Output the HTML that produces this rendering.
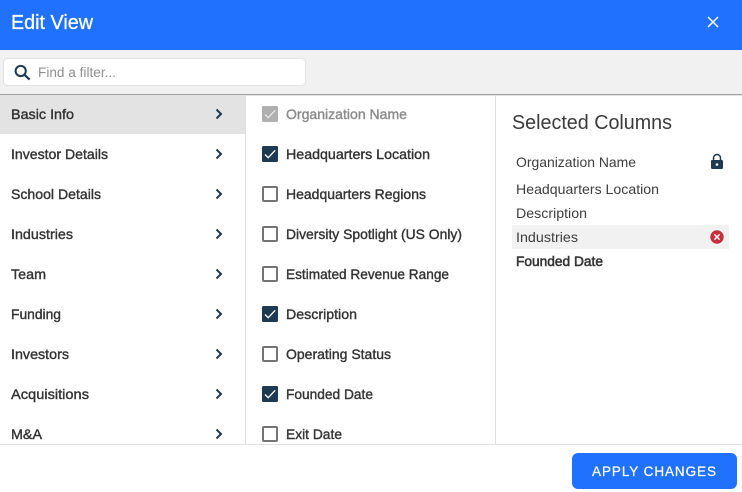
<!DOCTYPE html>
<html lang="en">
<head>
<meta charset="utf-8">
<title>Edit View</title>
<style>
html,body{margin:0;padding:0;width:742px;height:492px;overflow:hidden;background:#fff}
svg{display:block;position:absolute;left:0;top:0}
text{font-family:"Liberation Sans",sans-serif;font-size:14px}
.m{fill:#333;stroke:#333;stroke-width:.38px}
.g{fill:#8a8a8a;stroke:#8a8a8a;stroke-width:.38px}
.r{fill:#3d3d3d}
</style>
</head>
<body>
<svg width="742" height="492" viewBox="0 0 742 492" xmlns="http://www.w3.org/2000/svg">
<rect width="742" height="50" fill="#2171ff"/>
<rect y="50" width="742" height="44" fill="#f1f1f1"/>
<rect y="94" width="742" height="1" fill="#a0a0a0"/>
<rect y="95" width="742" height="1" fill="#e4e4e4"/>
<text x="11" y="29" style="font-size:20px" fill="#fff" stroke="#fff" stroke-width=".3" textLength="82" lengthAdjust="spacingAndGlyphs">Edit View</text>
<path d="M708 17l10 10M718 17l-10 10" stroke="#fff" stroke-width="1.5" fill="none"/>

<rect x="3.5" y="58.5" width="302" height="27" rx="4" fill="#fff" stroke="#e2e2e2"/>
<circle cx="20.7" cy="71" r="5.1" fill="none" stroke="#1d3a50" stroke-width="2"/>
<path d="M24.5 74.8L29.6 79.6" stroke="#1d3a50" stroke-width="2.2" fill="none"/>
<text x="38" y="77" fill="#8f8f8f" textLength="78" lengthAdjust="spacingAndGlyphs">Find a filter...</text>

<rect y="96" width="245" height="38" fill="#e3e3e3"/>
<rect x="245" y="96" width="1" height="348" fill="#e0e0e0"/>
<rect x="495" y="96" width="1" height="348" fill="#e0e0e0"/>
<rect y="444" width="742" height="1" fill="#e0e0e0"/>

<text class="m" x="11" y="119" textLength="63" lengthAdjust="spacingAndGlyphs">Basic Info</text>
<text class="m" x="11" y="159" textLength="97" lengthAdjust="spacingAndGlyphs">Investor Details</text>
<text class="m" x="11" y="199" textLength="90" lengthAdjust="spacingAndGlyphs">School Details</text>
<text class="m" x="11" y="239" textLength="62" lengthAdjust="spacingAndGlyphs">Industries</text>
<text class="m" x="11" y="279" textLength="35" lengthAdjust="spacingAndGlyphs">Team</text>
<text class="m" x="11" y="319" textLength="50" lengthAdjust="spacingAndGlyphs">Funding</text>
<text class="m" x="11" y="359" textLength="58" lengthAdjust="spacingAndGlyphs">Investors</text>
<text class="m" x="11" y="399" textLength="78" lengthAdjust="spacingAndGlyphs">Acquisitions</text>
<text class="m" x="11" y="439" textLength="31" lengthAdjust="spacingAndGlyphs">M&amp;A</text>

<g fill="none" stroke="#1d3a50" stroke-width="2">
<path d="M216.5 109.5l4.5 4.5-4.5 4.5"/>
<path d="M216.5 149.5l4.5 4.5-4.5 4.5"/>
<path d="M216.5 189.5l4.5 4.5-4.5 4.5"/>
<path d="M216.5 229.5l4.5 4.5-4.5 4.5"/>
<path d="M216.5 269.5l4.5 4.5-4.5 4.5"/>
<path d="M216.5 309.5l4.5 4.5-4.5 4.5"/>
<path d="M216.5 349.5l4.5 4.5-4.5 4.5"/>
<path d="M216.5 389.5l4.5 4.5-4.5 4.5"/>
<path d="M216.5 429.5l4.5 4.5-4.5 4.5"/>
</g>

<rect x="262" y="106" width="16" height="16" rx="1.5" fill="#b0b0b0"/>
<path d="M265 114.5l3.2 3.2 7-7.4" fill="none" stroke="#e8e8e8" stroke-width="1.3"/>
<rect x="262" y="146" width="16" height="16" rx="1.5" fill="#1d3a50"/>
<path d="M265 154.5l3.2 3.2 7-7.4" fill="none" stroke="#fff" stroke-width="1.3"/>
<rect x="263" y="187" width="14" height="14" rx="1" fill="#fff" stroke="#757575" stroke-width="2"/>
<rect x="263" y="227" width="14" height="14" rx="1" fill="#fff" stroke="#757575" stroke-width="2"/>
<rect x="263" y="267" width="14" height="14" rx="1" fill="#fff" stroke="#757575" stroke-width="2"/>
<rect x="262" y="306" width="16" height="16" rx="1.5" fill="#1d3a50"/>
<path d="M265 314.5l3.2 3.2 7-7.4" fill="none" stroke="#fff" stroke-width="1.3"/>
<rect x="263" y="347" width="14" height="14" rx="1" fill="#fff" stroke="#757575" stroke-width="2"/>
<rect x="262" y="386" width="16" height="16" rx="1.5" fill="#1d3a50"/>
<path d="M265 394.5l3.2 3.2 7-7.4" fill="none" stroke="#fff" stroke-width="1.3"/>
<rect x="263" y="427" width="14" height="14" rx="1" fill="#fff" stroke="#757575" stroke-width="2"/>

<text class="g" x="286" y="119" textLength="121" lengthAdjust="spacingAndGlyphs">Organization Name</text>
<text class="m" x="286" y="159" textLength="144" lengthAdjust="spacingAndGlyphs">Headquarters Location</text>
<text class="m" x="286" y="199" textLength="140" lengthAdjust="spacingAndGlyphs">Headquarters Regions</text>
<text class="m" x="286" y="239" textLength="176" lengthAdjust="spacingAndGlyphs">Diversity Spotlight (US Only)</text>
<text class="m" x="286" y="279" textLength="163" lengthAdjust="spacingAndGlyphs">Estimated Revenue Range</text>
<text class="m" x="286" y="319" textLength="71" lengthAdjust="spacingAndGlyphs">Description</text>
<text class="m" x="286" y="359" textLength="105" lengthAdjust="spacingAndGlyphs">Operating Status</text>
<text class="m" x="286" y="399" textLength="87" lengthAdjust="spacingAndGlyphs">Founded Date</text>
<text class="m" x="286" y="439" textLength="56" lengthAdjust="spacingAndGlyphs">Exit Date</text>

<text x="512" y="129" style="font-size:20px" fill="#3a3a3a" textLength="160" lengthAdjust="spacingAndGlyphs">Selected Columns</text>
<rect x="512" y="225" width="217" height="24" fill="#f1f1f1"/>
<text class="r" x="516" y="167" textLength="120" lengthAdjust="spacingAndGlyphs">Organization Name</text>
<text class="r" x="516" y="194" textLength="143" lengthAdjust="spacingAndGlyphs">Headquarters Location</text>
<text class="r" x="516" y="218" textLength="71" lengthAdjust="spacingAndGlyphs">Description</text>
<text class="r" x="516" y="242" textLength="62" lengthAdjust="spacingAndGlyphs">Industries</text>
<text class="m" x="516" y="266" textLength="87" lengthAdjust="spacingAndGlyphs" style="stroke-width:.55px">Founded Date</text>

<path d="M713.5 160.5v-2.5a3.5 3.5 0 0 1 7 0v2.5" fill="none" stroke="#1d3a50" stroke-width="1.5"/>
<rect x="711" y="160" width="12" height="9" rx="1.2" fill="#1d3a50"/>
<circle cx="717" cy="164.5" r="1.3" fill="#fff"/>

<circle cx="717" cy="237" r="6.7" fill="#c62f3b"/>
<path d="M714.4 234.4l5.2 5.2M719.6 234.4l-5.2 5.2" stroke="#fff" stroke-width="1.5" fill="none"/>

<rect x="572" y="453" width="165" height="36" rx="6" fill="#2171ff"/>
<text x="592" y="476" style="font-size:13.5px" fill="#fff" stroke="#fff" stroke-width=".25" textLength="124">APPLY CHANGES</text>
</svg>
</body>
</html>
